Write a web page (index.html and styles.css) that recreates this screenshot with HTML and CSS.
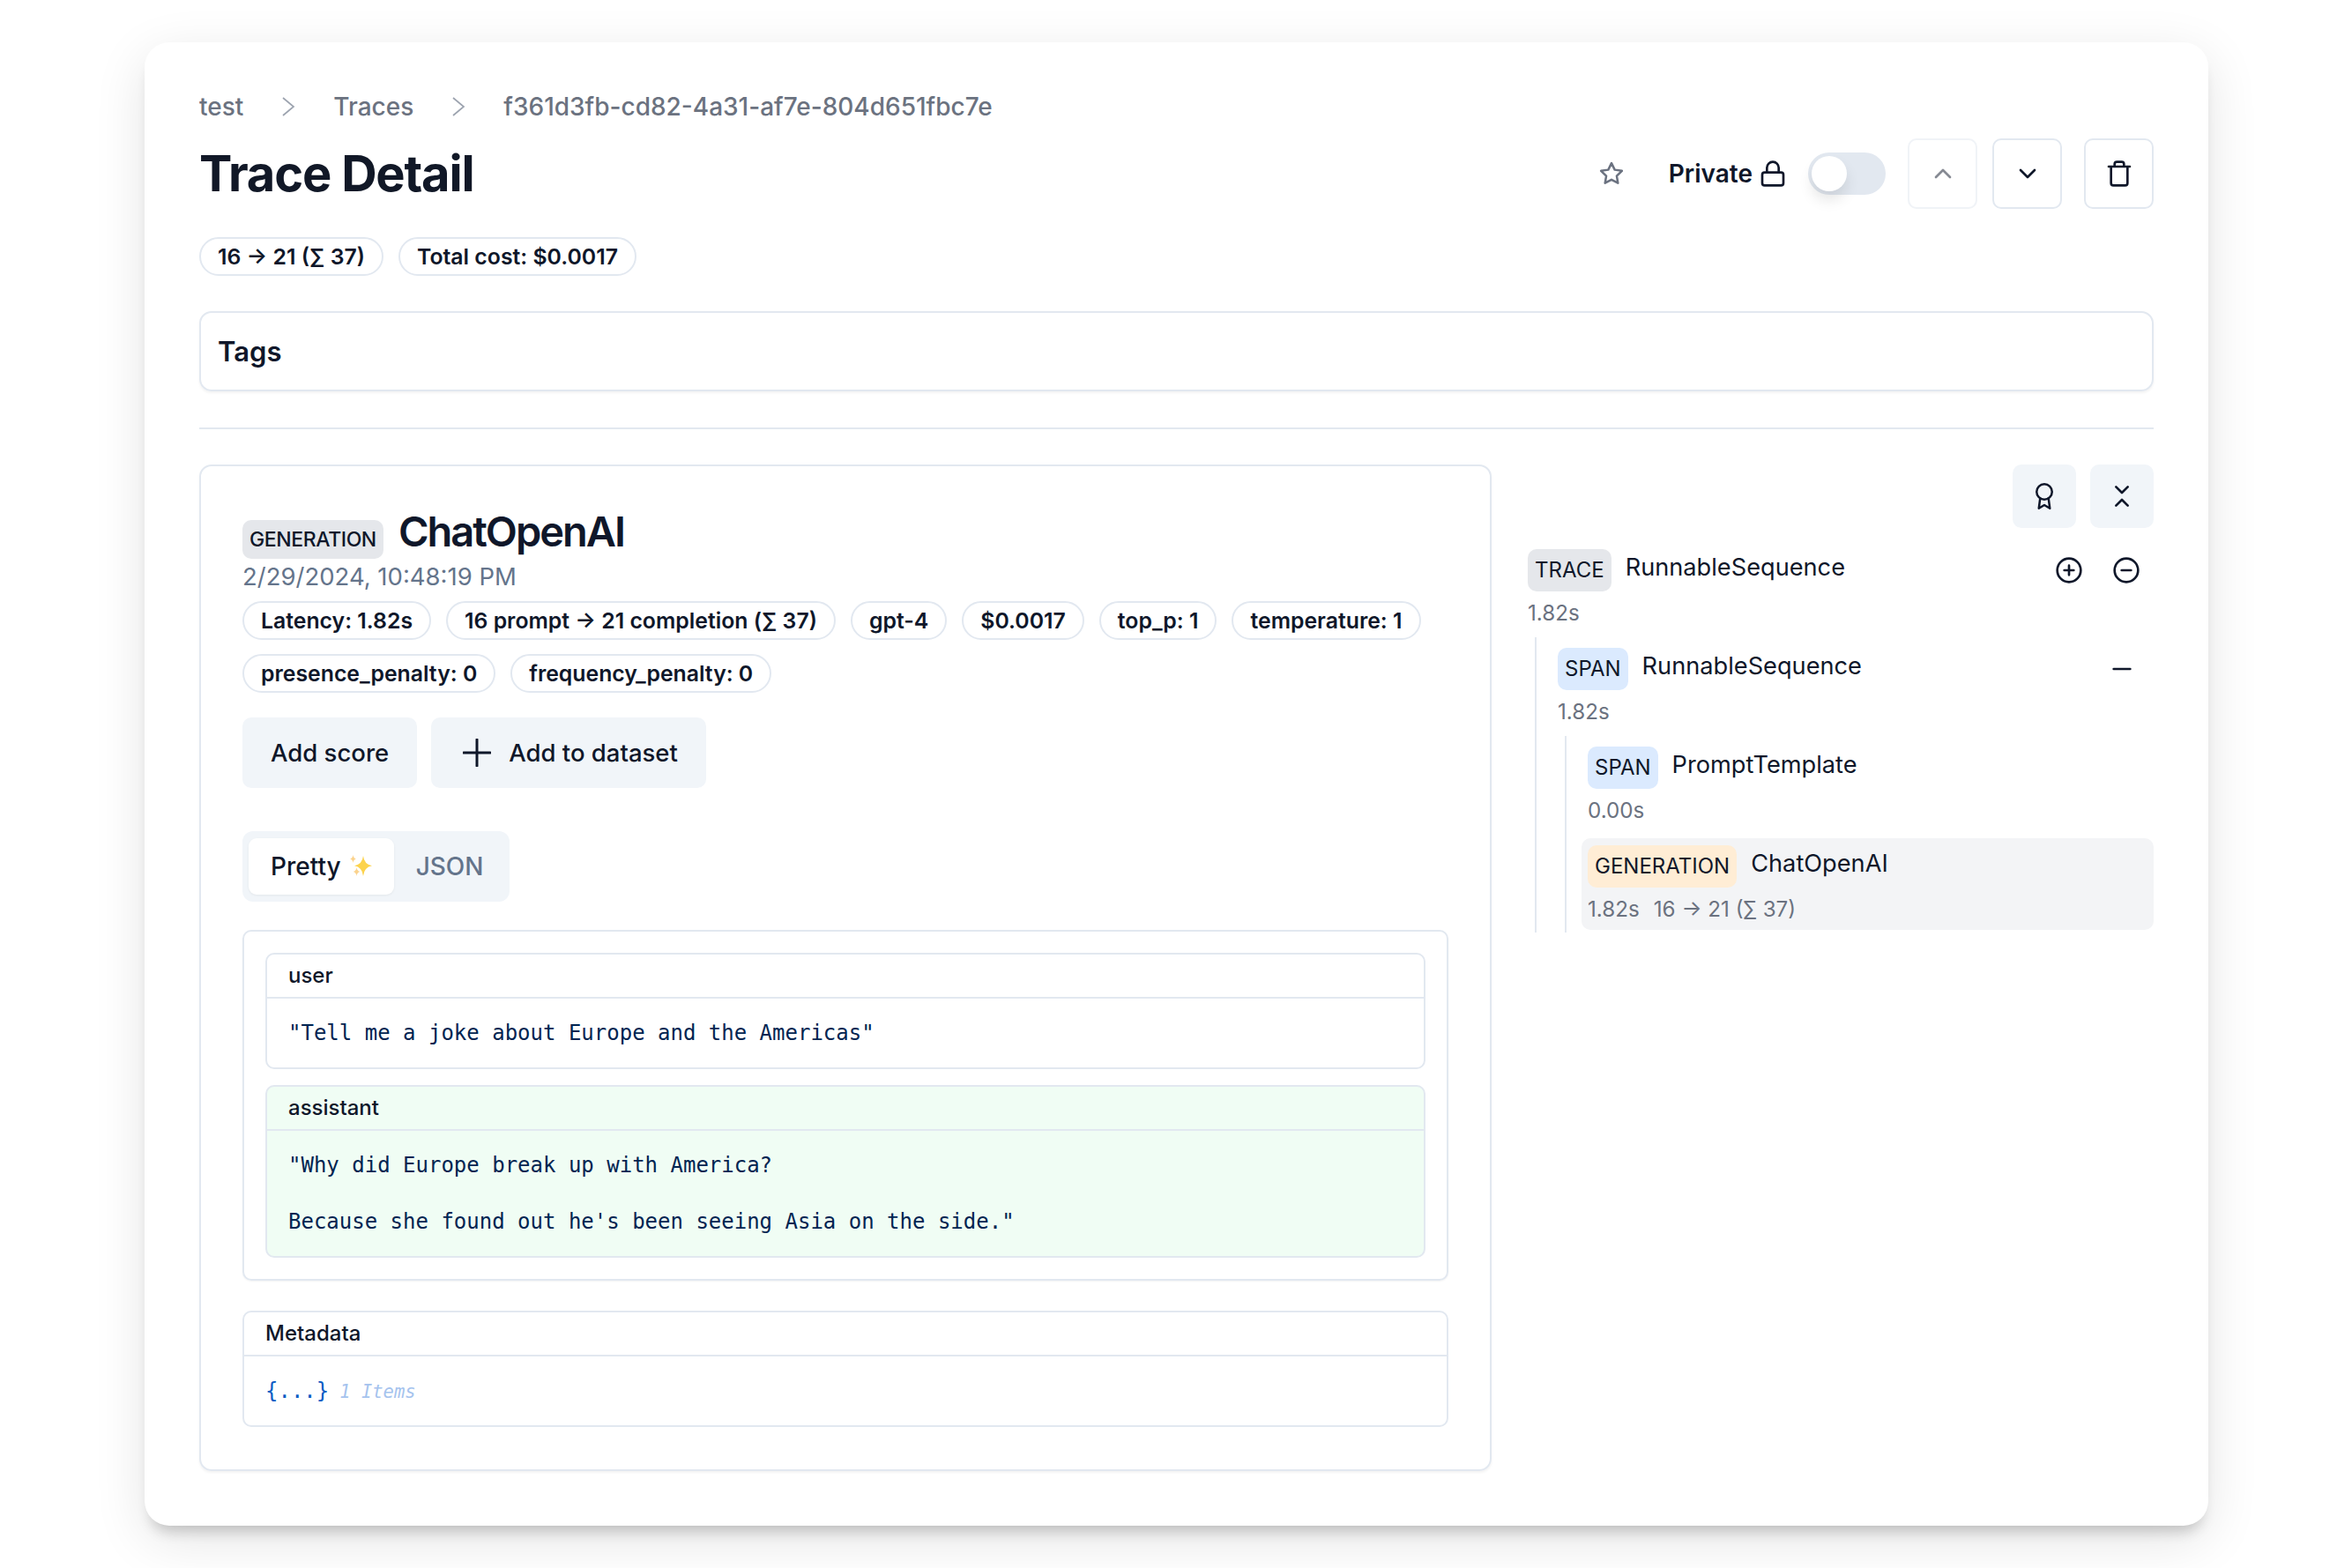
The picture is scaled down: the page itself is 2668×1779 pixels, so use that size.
FILE: index.html

```html
<!DOCTYPE html>
<html lang="en">
<head>
  <meta charset="UTF-8" />
  <meta name="viewport" content="width=device-width, initial-scale=1.0"/>
  <title>Trace Detail</title>
  <link rel="stylesheet" href="styles.css">
</head>
<body>
  <div class="window">
    <nav class="crumbs">
      <span>test</span>
      <svg class="crumb-sep" viewBox="0 0 24 24"><path d="M6 2l12 10-12 10"/></svg>
      <span>Traces</span>
      <svg class="crumb-sep" viewBox="0 0 24 24"><path d="M6 2l12 10-12 10"/></svg>
      <span>f361d3fb-cd82-4a31-af7e-804d651fbc7e</span>
    </nav>

    <header class="head">
      <h1>Trace Detail</h1>
      <div class="actions">
        <svg class="icon star" viewBox="0 0 24 24"><path d="M12 2.500l2.950 6 6.550.95-4.750 4.600 1.100 6.500L12 17.500l-5.850 3.050 1.100-6.500L2.500 9.450l6.550-.95z"/></svg>
        <span class="private">Private</span>
        <svg class="icon big lock" viewBox="0 0 24 24"><rect x="3" y="11" width="18" height="11" rx="2"/><path d="M7 11V7a5 5 0 0 1 10 0v4"/></svg>
        <span class="toggle"><span class="thumb"></span></span>
        <button class="outline-btn dim"><svg class="icon big" viewBox="0 0 24 24"><path d="M6 15l6-6 6 6"/></svg></button>
        <button class="outline-btn"><svg class="icon big" viewBox="0 0 24 24"><path d="M6 9l6 6 6-6"/></svg></button>
        <button class="outline-btn trash"><svg class="icon big" viewBox="0 0 24 24"><path d="M3 6h18M19 6v14a2 2 0 0 1-2 2H7a2 2 0 0 1-2-2V6M8 6V4a2 2 0 0 1 2-2h4a2 2 0 0 1 2 2v2"/></svg></button>
      </div>
    </header>

    <div class="pills top-pills">
      <span class="pill">16 → 21 (∑ 37)</span>
      <span class="pill">Total cost: $0.0017</span>
    </div>

    <section class="tags">Tags</section>
    <hr class="rule">

    <div class="columns">
      <main class="card">
        <div class="obs-title">
          <span class="badge grey head-badge">GENERATION</span>
          <h2>ChatOpenAI</h2>
        </div>
        <div class="date">2/29/2024, 10:48:19 PM</div>
        <div class="pills">
          <span class="pill">Latency: 1.82s</span>
          <span class="pill">16 prompt → 21 completion (∑ 37)</span>
          <span class="pill">gpt-4</span>
          <span class="pill">$0.0017</span>
          <span class="pill">top_p: 1</span>
          <span class="pill">temperature: 1</span>
          <span class="pill">presence_penalty: 0</span>
          <span class="pill">frequency_penalty: 0</span>
        </div>
        <div class="buttons">
          <button class="soft-btn">Add score</button>
          <button class="soft-btn">
            <svg class="plus" viewBox="0 0 32 32"><path d="M16 1v30M1 16h30"/></svg>
            Add to dataset
          </button>
        </div>
        <div class="tabs">
          <span class="tab active">Pretty
            <svg class="sparkle" viewBox="0 0 25 26">
              <path class="spark-big" d="M15 1Q16 10.500 25 12.300 16 14 15 24 14 14 5 12.300 14 10.500 15 1z"/>
              <path class="spark-small" d="M3.500 0Q4 3.800 7 4.500 4 5.200 3.500 9 3 5.200 0 4.500 3 3.800 3.500 0z"/>
              <path class="spark-small" d="M7.500 14Q8 18.200 11.500 19 8 19.800 7.500 24 7 19.800 3.500 19 7 18.200 7.500 14z"/>
            </svg>
          </span>
          <span class="tab">JSON</span>
        </div>

        <div class="panel messages">
          <div class="msg">
            <div class="msg-head">user</div>
            <pre class="msg-body">"Tell me a joke about Europe and the Americas"</pre>
          </div>
          <div class="msg assistant">
            <div class="msg-head">assistant</div>
            <pre class="msg-body">"Why did Europe break up with America?

Because she found out he's been seeing Asia on the side."</pre>
          </div>
        </div>

        <div class="msg metadata">
          <div class="msg-head">Metadata</div>
          <div class="msg-body"><span class="braces">{...}</span><span class="count">1 Items</span></div>
        </div>
      </main>

      <aside class="tree">
        <div class="tree-tools">
          <button class="tool-btn"><svg class="icon" viewBox="0 0 24 24"><circle cx="12" cy="8" r="7"/><path d="M8.210 13.890L7 23l5-3 5 3-1.210-9.120"/></svg></button>
          <button class="tool-btn"><svg class="icon big" viewBox="0 0 24 24"><path d="M7 20l5-5 5 5M7 4l5 5 5-5"/></svg></button>
        </div>

        <div class="node">
          <div class="node-row">
            <span class="badge grey">TRACE</span>
            <span class="node-name">RunnableSequence</span>
            <span class="node-tools">
              <svg class="icon big" viewBox="0 0 24 24"><circle cx="12" cy="12" r="10"/><path d="M12 8v8M8 12h8"/></svg>
              <svg class="icon big" viewBox="0 0 24 24"><circle cx="12" cy="12" r="10"/><path d="M8 12h8"/></svg>
            </span>
          </div>
          <div class="node-meta">1.82s</div>
        </div>

        <div class="branch">
          <div class="node">
            <div class="node-row">
              <span class="badge blue">SPAN</span>
              <span class="node-name">RunnableSequence</span>
              <span class="node-tools collapse">
                <svg class="icon big" viewBox="0 0 24 24"><path d="M5 12h14"/></svg>
              </span>
            </div>
            <div class="node-meta">1.82s</div>
          </div>

          <div class="branch inner">
            <div class="node">
              <div class="node-row">
                <span class="badge blue">SPAN</span>
                <span class="node-name">PromptTemplate</span>
              </div>
              <div class="node-meta">0.00s</div>
            </div>
            <div class="node selected">
              <div class="node-row">
                <span class="badge orange">GENERATION</span>
                <span class="node-name">ChatOpenAI</span>
              </div>
              <div class="node-meta"><span>1.82s</span><span>16 → 21 (∑ 37)</span></div>
            </div>
          </div>
        </div>
      </aside>
    </div>
  </div>
</body>
</html>
```

FILE: styles.css

```css
* {
  box-sizing: border-box;
}
html, body {
  margin: 0;
  background: #fff;
}
body {
  font-family: Inter, "Liberation Sans", sans-serif;
  color: #0f172a;
  height: 1779px;
  overflow: hidden;
  padding: 48px 163px 0 164px;
}
.window {
  width: 2341px;
  height: 1683px;
  background: #fff;
  border-radius: 28px;
  padding: 56px 62px 0;
  box-shadow: 0 14px 16px -8px rgba(0, 0, 0, 0.2), 0 16px 60px rgba(0, 0, 0, 0.11);
}
svg {
  display: block;
}
.icon {
  width: 30px;
  height: 30px;
  fill: none;
  stroke: currentColor;
  stroke-width: 2;
  stroke-linecap: round;
  stroke-linejoin: round;
}
.icon.big {
  width: 32px;
  height: 32px;
}

.crumbs {
  display: flex;
  align-items: center;
  height: 34px;
  font-size: 28px;
  color: #6b7280;
  font-weight: 500;
}
.crumb-sep {
  width: 24px;
  height: 24px;
  margin: 0 39px;
  fill: none;
  stroke: #9ca3af;
  stroke-width: 1.700;
}

.head {
  display: flex;
  justify-content: space-between;
  align-items: center;
  height: 80px;
  margin-top: 19px;
}
h1 {
  margin: 0;
  font-size: 56px;
  font-weight: 700;
  letter-spacing: -1.200px;
  color: #111827;
}
.actions {
  display: flex;
  align-items: center;
}
.star {
  color: #6b7280;
  margin-right: 50px;
}
.private {
  font-size: 28px;
  font-weight: 600;
  margin-right: 7px;
}
.lock {
  margin-right: 24px;
}
.toggle {
  width: 88px;
  height: 48px;
  border-radius: 24px;
  background: #e2e8f0;
  padding: 4px;
  margin-right: 25px;
}
.thumb {
  display: block;
  width: 40px;
  height: 40px;
  border-radius: 50%;
  background: #fff;
  box-shadow: 0 10px 16px rgba(0, 0, 0, 0.1);
}
.outline-btn {
  width: 79px;
  height: 80px;
  display: flex;
  align-items: center;
  justify-content: center;
  background: #fff;
  border: 2px solid #e2e8f0;
  border-radius: 10px;
  padding: 0;
  margin-right: 17px;
  color: #0f172a;
}
.outline-btn.dim {
  opacity: 0.5;
}
.outline-btn.trash {
  margin: 0 0 0 8px;
}

.pills {
  display: flex;
  flex-wrap: wrap;
  gap: 16px 17px;
}
.top-pills {
  margin-top: 32px;
}
.pill {
  display: flex;
  align-items: center;
  height: 44px;
  padding: 0 19px;
  border: 2px solid #e2e8f0;
  border-radius: 22px;
  font-size: 24.800px;
  font-weight: 600;
  white-space: nowrap;
}

.tags {
  height: 91px;
  margin-top: 40px;
  padding: 0 19px;
  display: flex;
  align-items: center;
  border: 2px solid #e2e8f0;
  border-radius: 14px;
  box-shadow: 0 2px 3px rgba(0, 0, 0, 0.05);
  font-size: 31px;
  font-weight: 600;
}
.rule {
  height: 2px;
  margin: 41px 0 40px;
  border: 0;
  background: #e2e8f0;
}

.columns {
  display: grid;
  grid-template-columns: 1466px 1fr;
  gap: 41px;
}
.card {
  height: 1142px;
  padding: 45px 47px 0;
  border: 2px solid #e2e8f0;
  border-radius: 14px;
  box-shadow: 0 2px 3px rgba(0, 0, 0, 0.05);
}
.obs-title {
  display: flex;
  align-items: baseline;
  gap: 17px;
  height: 54px;
}
h2 {
  margin: 0;
  font-size: 47px;
  font-weight: 600;
  letter-spacing: -2px;
}
.badge {
  display: inline-block;
  flex: none;
  height: 48px;
  line-height: 48px;
  padding: 0 8px;
  border-radius: 10px;
  font-size: 24px;
  font-weight: 400;
  color: #0f172a;
}
.head-badge {
  height: 44px;
  line-height: 44px;
  font-size: 23px;
  font-weight: 500;
  letter-spacing: -0.400px;
}
.grey {
  background: #e5e7eb;
}
.blue {
  background: #dbeafe;
}
.orange {
  background: #ffedd5;
}
.date {
  margin-top: 7px;
  line-height: 38px;
  font-size: 27.500px;
  color: #64748b;
}
.date + .pills {
  margin-top: 9px;
}
.buttons {
  display: flex;
  gap: 16px;
  margin-top: 28px;
}
.soft-btn {
  height: 80px;
  display: flex;
  align-items: center;
  gap: 20px;
  padding: 0 32px;
  background: #f1f5f9;
  border: 0;
  border-radius: 10px;
  font: 500 27.500px Inter, sans-serif;
  color: #0f172a;
}
.plus {
  width: 32px;
  height: 32px;
  margin-left: 4px;
  fill: none;
  stroke: #0f172a;
  stroke-width: 3;
  stroke-linecap: round;
}
.tabs {
  display: flex;
  width: 303px;
  height: 80px;
  margin-top: 49px;
  padding: 8px 7px;
  background: #f1f5f9;
  border-radius: 12px;
}
.tab {
  display: flex;
  align-items: center;
  gap: 10px;
  padding: 0 25px;
  font-size: 28px;
  font-weight: 500;
  color: #64748b;
  border-radius: 9px;
}
.tab.active {
  background: #fff;
  color: #0f172a;
  box-shadow: 0 1px 3px rgba(0, 0, 0, 0.06);
}
.sparkle {
  width: 25px;
  height: 26px;
}
.spark-big {
  fill: #fcd34d;
}
.spark-small {
  fill: #fbd38d;
}

.panel {
  margin-top: 32px;
  padding: 24px;
  border: 2px solid #e2e8f0;
  border-radius: 10px;
  box-shadow: 0 1px 2px rgba(0, 0, 0, 0.05);
}
.messages {
  display: flex;
  flex-direction: column;
  gap: 18px;
}
.msg {
  border: 2px solid #e2e8f0;
  border-radius: 10px;
  overflow: hidden;
}
.assistant {
  background: #f0fdf4;
}
.metadata {
  margin-top: 34px;
  height: 132px;
}
.msg-head {
  height: 50px;
  display: flex;
  align-items: center;
  padding: 0 24px 2px;
  border-bottom: 2px solid #e2e8f0;
  font-size: 24px;
  font-weight: 500;
}
.msg-body {
  margin: 0;
  padding: 23px 24px;
  font-family: "DejaVu Sans Mono", "Liberation Mono", monospace;
  font-size: 24px;
  line-height: 32px;
  color: #002451;
  white-space: pre-wrap;
}
.braces {
  color: #0b5cc4;
}
.count {
  margin-left: 12px;
  font-size: 20.500px;
  font-style: italic;
  color: #a5c3ee;
}

.tree-tools {
  display: flex;
  justify-content: flex-end;
  gap: 16px;
  height: 96px;
}
.tool-btn {
  width: 72px;
  height: 72px;
  display: flex;
  align-items: center;
  justify-content: center;
  background: #f1f5f9;
  border: 0;
  border-radius: 10px;
  padding: 0;
  color: #0f172a;
}
.node {
  height: 100px;
}
.node-row {
  display: flex;
  align-items: flex-start;
  gap: 16px;
  height: 58px;
}
.node-name {
  font-size: 27.200px;
  line-height: 42px;
  color: #0f172a;
}
.node-tools {
  margin-left: auto;
  display: flex;
  gap: 33px;
  padding: 8px 15px 0 0;
}
.node-tools.collapse {
  padding: 8px 20px 0 0;
}
.node-meta {
  display: flex;
  gap: 16px;
  font-size: 24.200px;
  line-height: 30px;
  color: #6b7280;
}
.branch {
  margin-left: 8px;
  padding: 12px 0 0 24px;
  border-left: 2px solid #e2e8f0;
}
.branch.inner {
  padding: 12px 0 3px 17px;
}
.inner .node {
  padding-left: 7px;
}
.inner .node.selected {
  height: 104px;
  margin-top: 4px;
  padding: 8px 7px;
  background: #f3f4f6;
  border-radius: 10px;
}
```
